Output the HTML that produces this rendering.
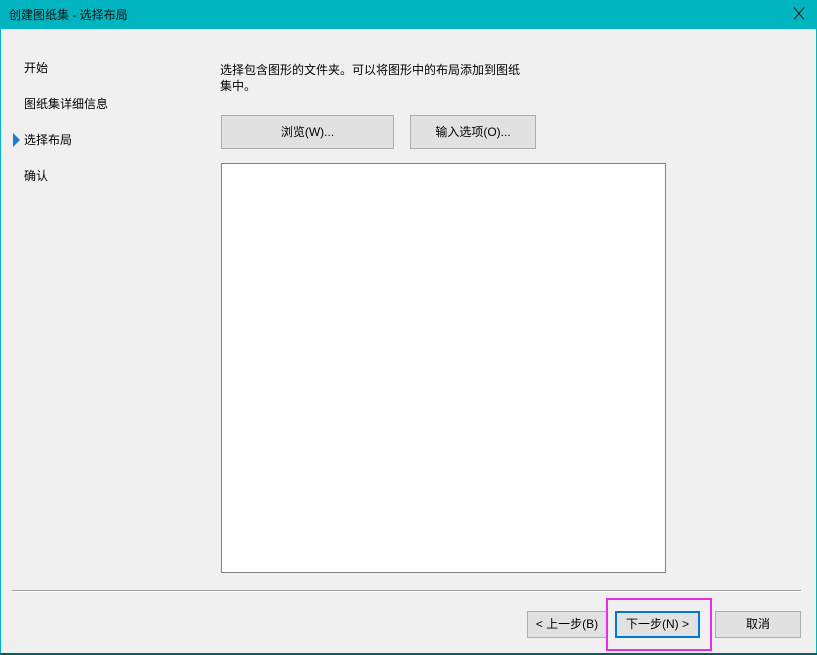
<!DOCTYPE html><html><head><meta charset="utf-8"><style>
*{margin:0;padding:0;box-sizing:border-box}
body{width:817px;height:655px;overflow:hidden;background:#00b4c0;font-family:"Liberation Sans","Noto Sans CJK SC",sans-serif;font-size:12px;color:#000;position:relative}
.a{position:absolute}
.win{left:1px;top:29px;width:815px;height:624px;background:#f0f0f0}
.btn{position:absolute;background:#e1e1e1;border:1px solid #adadad;text-align:center;font-size:12px}
</style></head><body>
<div class="a" style="left:9px;top:6px;font-size:12px;color:#111">创建图纸集 - 选择布局</div>
<svg class="a" style="left:793px;top:7px" width="12" height="13"><path d="M1 0.5L11 12.5M11 0.5L1 12.5" stroke="#222" stroke-width="1" fill="none"/></svg>
<div class="a win"></div>
<div class="a" style="left:24px;top:59px">开始</div>
<div class="a" style="left:24px;top:95px">图纸集详细信息</div>
<div class="a" style="left:13px;top:133px;width:0;height:0;border-top:7px solid transparent;border-bottom:7px solid transparent;border-left:7px solid #1e7bd4"></div>
<div class="a" style="left:24px;top:131px">选择布局</div>
<div class="a" style="left:24px;top:167px">确认</div>
<div class="a" style="left:220px;top:62px;line-height:16px">选择包含图形的文件夹。可以将图形中的布局添加到图纸<br>集中。</div>
<div class="btn" style="left:221px;top:115px;width:173px;height:34px;line-height:32px">浏览(W)...</div>
<div class="btn" style="left:410px;top:115px;width:126px;height:34px;line-height:32px">输入选项(O)...</div>
<div class="a" style="left:221px;top:163px;width:445px;height:410px;background:#fff;border:1px solid #828282"></div>
<div class="a" style="left:12px;top:590px;width:789px;height:1px;background:#a0a0a0"></div>
<div class="a" style="left:12px;top:591px;width:789px;height:1px;background:#fff"></div>
<div class="btn" style="left:527px;top:611px;width:80px;height:27px;line-height:25px">&lt; 上一步(B)</div>
<div class="btn" style="left:615px;top:611px;width:85px;height:27px;line-height:23px;border:2px solid #0078d7">下一步(N) &gt;</div>
<div class="btn" style="left:715px;top:611px;width:86px;height:27px;line-height:25px">取消</div>
<div class="a" style="left:606px;top:598px;width:106px;height:53px;border:2px solid #e62ee6"></div>
<div class="a" style="left:0;top:653px;width:817px;height:2px;background:#0a5a60"></div>
</body></html>
